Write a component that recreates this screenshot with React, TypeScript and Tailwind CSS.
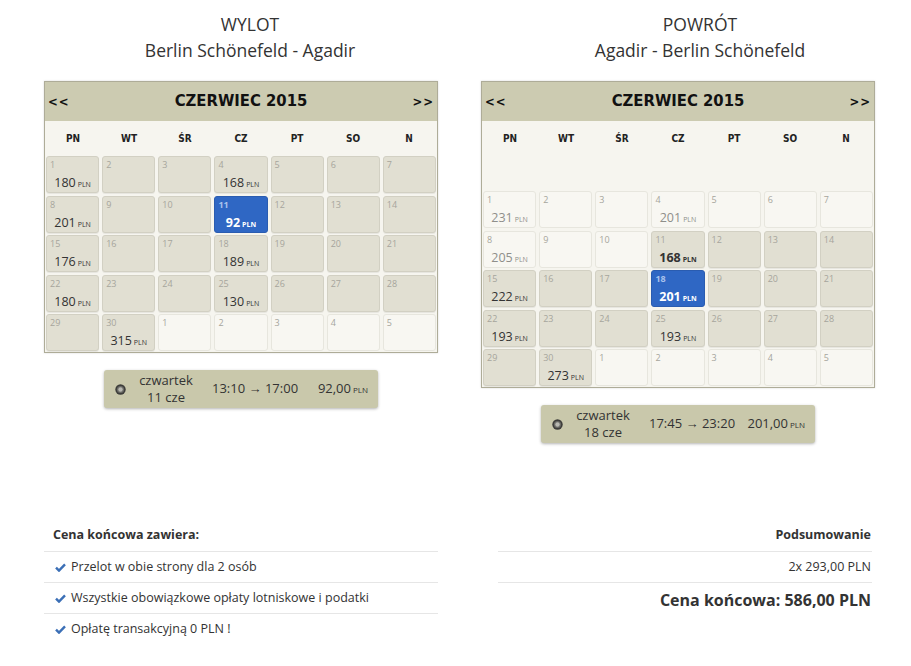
import React from 'react';

type Day = { day: number; price?: number; other?: boolean };

const WEEKDAYS = ['PN', 'WT', 'ŚR', 'CZ', 'PT', 'SO', 'N'];

const buildWeeks = (prices: Record<number, number>): Day[][] => {
  const days: Day[] = [];
  for (let d = 1; d <= 30; d++) days.push({ day: d, price: prices[d] });
  for (let d = 1; d <= 5; d++) days.push({ day: d, other: true });
  const weeks: Day[][] = [];
  for (let i = 0; i < days.length; i += 7) weeks.push(days.slice(i, i + 7));
  return weeks;
};

const outboundPrices = { 1: 180, 4: 168, 8: 201, 11: 92, 15: 176, 18: 189, 22: 180, 25: 130, 30: 315 };
const returnPrices = { 1: 231, 4: 201, 8: 205, 11: 168, 15: 222, 18: 201, 22: 193, 25: 193, 30: 273 };

const Cell: React.FC<{
  d: Day;
  selected: boolean;
  inactive: boolean;
  bold: boolean;
}> = ({ d, selected, inactive, bold }) => {
  let box = 'bg-[#e1dfd2] border-[#d2d0c3] shadow-[0_1px_0_rgba(0,0,0,0.06)]';
  if (inactive) box = 'bg-[#f8f7f2] border-[#e7e6de]';
  if (selected) box = 'bg-[#2f67c4] border-[#2a5cb0]';

  return (
    <div className={`h-[37px] rounded-[3px] border ${box} flex flex-col px-[3px] pt-[2px]`}>
      <span
        className={`text-[9px] leading-[11px] ${
          selected ? 'text-[#a9c2ec] font-bold' : 'text-[#a6a59c]'
        }`}
      >
        {d.day}
      </span>
      {d.price !== undefined && (
        <span
          className={`text-center mt-[4px] leading-[14px] ${
            selected
              ? 'text-white font-bold'
              : inactive
              ? 'text-[#8f8f8a]'
              : bold
              ? 'text-[#333] font-bold'
              : 'text-[#333]'
          }`}
        >
          <span className="text-[12.5px]">{d.price}</span>
          <span className="text-[7px] ml-[2px]">PLN</span>
        </span>
      )}
    </div>
  );
};

const Calendar: React.FC<{
  prices: Record<number, number>;
  selected: number;
  from?: number;
  boldDay?: number;
  spacer?: boolean;
}> = ({ prices, selected, from = 0, boldDay, spacer }) => {
  const weeks = buildWeeks(prices);
  return (
    <div className="w-[394px] border border-[#aeac98] shadow-[0_0_2px_rgba(0,0,0,0.15)] bg-[#f6f5ef]">
      <div className="h-[39px] bg-[#cccbb1] flex items-center justify-between px-[3px] font-['DejaVu_Sans_Condensed','DejaVu_Sans',sans-serif] font-bold text-[#111]">
        <span className="text-[13px] tracking-[1px]">&lt;&lt;</span>
        <span className="text-[16.5px]">CZERWIEC 2015</span>
        <span className="text-[13px] tracking-[1px]">&gt;&gt;</span>
      </div>
      <div className="grid grid-cols-7 h-[35px] items-center font-['DejaVu_Sans_Condensed','DejaVu_Sans',sans-serif] font-bold text-[10px] text-[#222]">
        {WEEKDAYS.map((w) => (
          <span key={w} className="text-center">
            {w}
          </span>
        ))}
      </div>
      {spacer && <div className="h-[35px]" />}
      <div className="grid grid-cols-7 gap-x-[3px] gap-y-[2.5px] px-[1px] pb-[1px]">
        {weeks.map((week) =>
          week.map((d) => (
            <Cell
              key={`${d.other ? 'n' : 'c'}${d.day}`}
              d={d}
              selected={!d.other && d.day === selected}
              inactive={!!d.other || d.day < from}
              bold={!d.other && d.day === boldDay}
            />
          ))
        )}
      </div>
    </div>
  );
};

const RadioDot = () => (
  <svg width="11" height="11" viewBox="0 0 11 11">
    <circle cx="5.5" cy="5.5" r="5.2" fill="#3d3d3a" />
    <circle cx="5.5" cy="5.5" r="3.6" fill="#6b6b66" />
    <circle cx="5.5" cy="5.5" r="2.2" fill="#b9b9b2" />
  </svg>
);

const FlightBar: React.FC<{ date: string; dep: string; arr: string; price: string }> = ({
  date,
  dep,
  arr,
  price,
}) => (
  <div className="w-[274px] h-[38px] rounded-[3px] bg-[#c9c8ab] shadow-[0_1px_3px_rgba(0,0,0,0.3)] flex items-center text-[#333] text-[13px]">
    <div className="w-[31px] pl-[11px] flex">
      <RadioDot />
    </div>
    <div className="w-[62px] flex flex-col items-center leading-[17px]">
      <span>czwartek</span>
      <span>{date}</span>
    </div>
    <div className="ml-[15px] whitespace-nowrap">
      {dep} → {arr}
    </div>
    <div className="ml-auto pr-[10px] whitespace-nowrap">
      {price}
      <span className="text-[8px] ml-[2px]">PLN</span>
    </div>
  </div>
);

const Check = () => (
  <svg width="11" height="9" viewBox="0 0 11 9" className="mr-[5px]">
    <path d="M1 4.6 L4 7.6 L10 1.4" fill="none" stroke="#3b6fb6" strokeWidth="2.4" />
  </svg>
);

export default function App() {
  return (
    <div className="w-[911px] h-[666px] bg-white font-['Open_Sans',sans-serif] text-[#333] overflow-hidden">
      <div className="flex pl-[44px] pt-[11px]">
        <div className="w-[437px] shrink-0 flex flex-col">
          <div className="w-[412px] text-center text-[17.5px] leading-[26px] text-[#333]">
            <div>WYLOT</div>
            <div>Berlin Schönefeld - Agadir</div>
          </div>
          <div className="mt-[18px]">
            <Calendar prices={outboundPrices} selected={11} />
          </div>
          <div className="w-[394px] flex justify-center mt-[17px]">
            <FlightBar date="11 cze" dep="13:10" arr="17:00" price="92,00" />
          </div>
        </div>
        <div className="w-[430px] shrink-0 flex flex-col">
          <div className="w-[430px] pl-[8px] text-center text-[17.5px] leading-[26px] text-[#333]">
            <div>POWRÓT</div>
            <div>Agadir - Berlin Schönefeld</div>
          </div>
          <div className="mt-[18px]">
            <Calendar prices={returnPrices} selected={18} from={11} boldDay={11} spacer />
          </div>
          <div className="w-[394px] flex justify-center mt-[17px]">
            <FlightBar date="18 cze" dep="17:45" arr="23:20" price="201,00" />
          </div>
        </div>
      </div>

      <div className="flex pl-[44px] mt-[76px]">
        <div className="w-[394px] shrink-0 text-[12.5px]">
          <div className="h-[32px] flex items-center px-[9px] font-bold">Cena końcowa zawiera:</div>
          {[
            'Przelot w obie strony dla 2 osób',
            'Wszystkie obowiązkowe opłaty lotniskowe i podatki',
            'Opłatę transakcyjną 0 PLN !',
          ].map((t) => (
            <div key={t} className="h-[31px] border-t border-[#e6e6e6] flex items-center px-[11px]">
              <Check />
              <span>{t}</span>
            </div>
          ))}
        </div>
        <div className="w-[374px] shrink-0 ml-[60px] text-right">
          <div className="h-[32px] flex items-center justify-end pr-[1px] text-[12.5px] font-bold">
            Podsumowanie
          </div>
          <div className="h-[31px] border-t border-[#e6e6e6] flex items-center justify-end pr-[1px] text-[12.5px]">
            2x 293,00 PLN
          </div>
          <div className="h-[34px] border-t border-[#e6e6e6] flex items-center justify-end pr-[1px] text-[16px] font-bold">
            Cena końcowa: 586,00 PLN
          </div>
        </div>
      </div>
    </div>
  );
}
